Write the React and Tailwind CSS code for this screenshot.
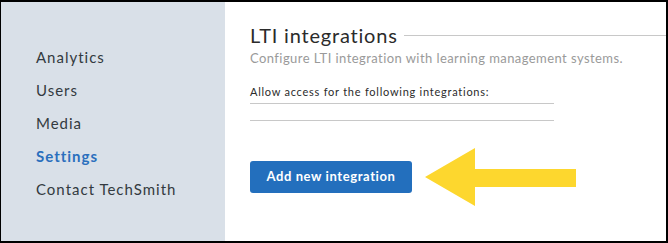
export default function App() {
  return (
    <div className="w-[668px] h-[243px] border-t-2 border-l border-r-2 border-b-2 border-black flex overflow-hidden bg-white" style={{ fontFamily: "Lato, 'Open Sans', sans-serif" }}>
      <div className="w-[224px] shrink-0 bg-[#d9e0e8] pt-[45px] pl-[35px] flex flex-col gap-[13px] text-[15px] tracking-[1px] text-[#333a40]">
        <div className="h-[20px] leading-[20px]">Analytics</div>
        <div className="h-[20px] leading-[20px]">Users</div>
        <div className="h-[20px] leading-[20px]">Media</div>
        <div className="h-[20px] leading-[20px] font-bold text-[#2a6fbd]">Settings</div>
        <div className="h-[20px] leading-[20px]">Contact TechSmith</div>
      </div>
      <div className="flex-1 pl-[25px] pt-[21px]">
        <div className="flex items-center">
          <div className="text-[20px] leading-[24px] text-[#2b2b2b] tracking-[0.8px]">LTI integrations</div>
          <div className="flex-1 h-px bg-[#c8c8c8] ml-[6px] mt-[1px]"></div>
        </div>
        <div className="mt-[3px] text-[13px] leading-[16px] tracking-[0.43px] text-[#9a9a9a]">Configure LTI integration with learning management systems.</div>
        <div className="w-[304px] mt-[19px]">
          <div className="text-[11px] leading-[14px] tracking-[0.75px] text-[#2b2b2b] pb-[4px] border-b border-[#c8c8c8]">Allow access for the following integrations:</div>
          <div className="h-[17px] border-b border-[#c8c8c8]"></div>
        </div>
        <div className="flex items-center mt-[26px]">
          <button className="w-[162px] h-[32px] rounded-[3px] bg-[#236fbd] text-white text-[13px] font-bold tracking-[0.6px]">Add new integration</button>
          <svg width="154" height="60" viewBox="0 0 154 60" className="ml-[13px]">
            <polygon points="0,30 50,1 50,22 151,22 151,40 50,40 50,59" fill="#fdd72e" />
          </svg>
        </div>
      </div>
    </div>
  );
}
